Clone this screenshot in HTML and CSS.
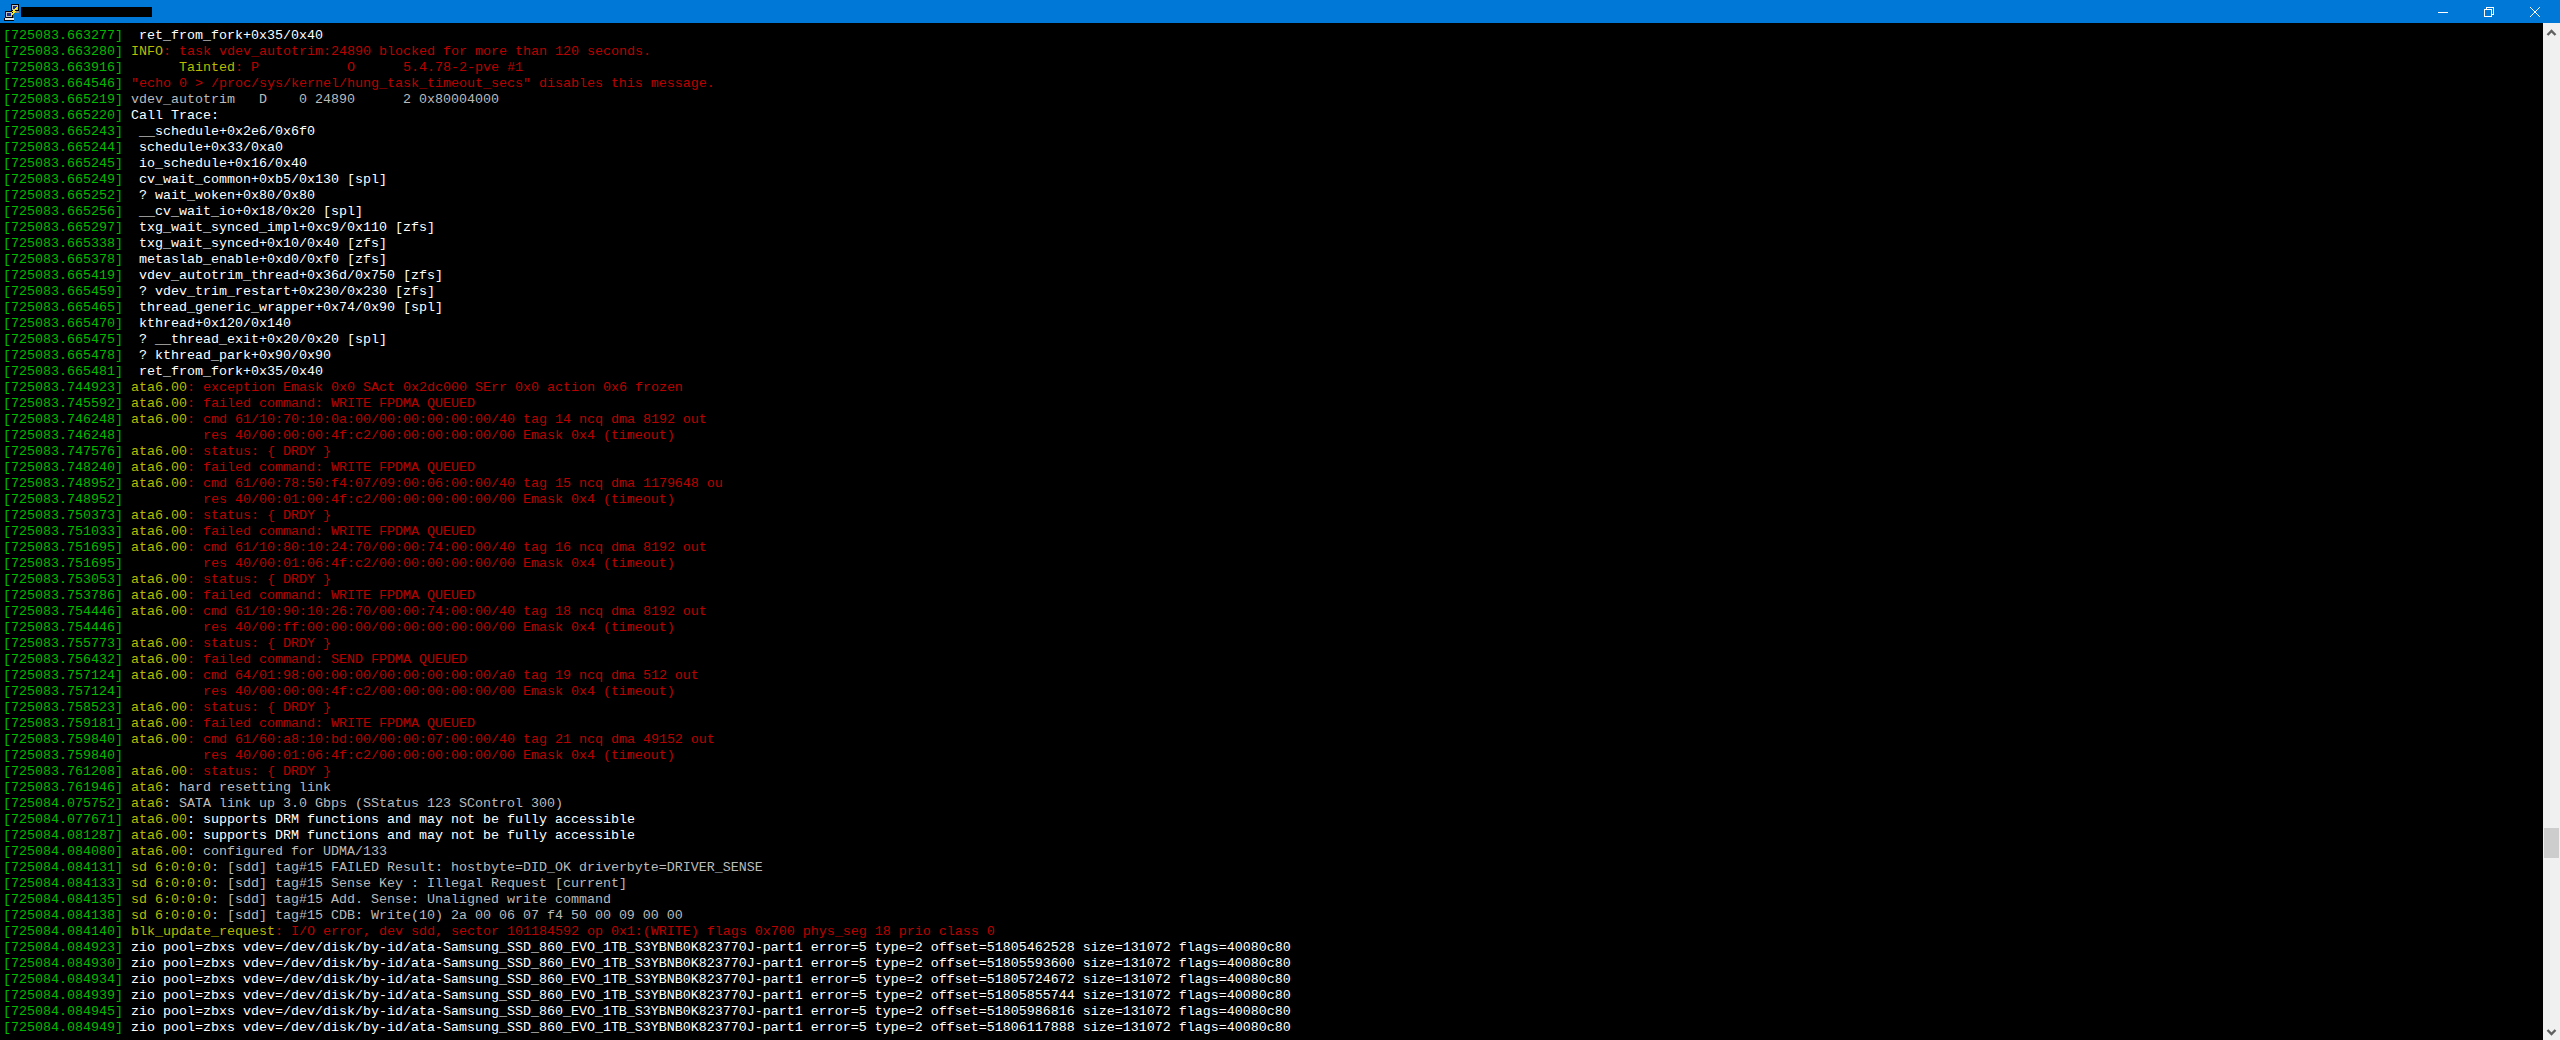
FILE: index.html
```html
<!DOCTYPE html>
<html lang="en">
<head>
<meta charset="utf-8">
<title>PuTTY</title>
<link rel="stylesheet" href="styles.css">
</head>
<body>
<div class="window">
<header class="titlebar">
<svg class="appicon" width="18" height="18" viewBox="0 0 18 18" shape-rendering="crispEdges">
<path fill="#c0c0c0" d="M9 1h8v7H9z"/><path fill="#000" d="M9 1h8v1H9zM9 1h1v7H9zM16 1h1v7h-1zM9 7h8v1H9z"/><path fill="#1a2f8f" d="M11 3h4v3h-4z"/><path fill="#8a8a8a" d="M8 8h9v2H8z"/>
<path fill="#c0c0c0" d="M3 8h8v7H3z"/><path fill="#000" d="M3 8h8v1H3zM3 8h1v7H3zM10 8h1v7h-1zM3 14h8v1H3z"/><path fill="#1a2f8f" d="M5 10h4v3H5z"/><path fill="#e8e8e8" d="M2 15h10v2H2z"/><path fill="#000" d="M2 17h10v1H2zM2 15h1v2H2z"/>
<path fill="#ffe81a" d="M14 4h2v1h-1v1h-1v1h-1v1h1v1h-1v1h-1v1h-1v1H9v-1h1v-1h1V9h-1V8h1V7h1V6h1V5h1z"/>
</svg>
<div class="redacted"></div>
<div class="caption">
<svg class="capicon" width="10" height="10" viewBox="0 0 10 10"><path d="M0 5.5h10" stroke="#fff" fill="none"/></svg>
<svg class="capicon" width="10" height="10" viewBox="0 0 10 10" shape-rendering="crispEdges"><path d="M2.5 2.5V.5h7v7h-2M.5 2.5h7v7h-7z" stroke="#fff" fill="none"/></svg>
<svg class="capicon" width="10" height="10" viewBox="0 0 10 10"><path d="M0 0l10 10M10 0L0 10" stroke="#fff" fill="none"/></svg>
</div>
</header>
<main class="body">
<div class="term">
<div class="l"><span class="g">[725083.663277]</span> <span class="w"> ret_from_fork+0x35/0x40</span></div>
<div class="l"><span class="g">[725083.663280]</span> <span class="y">INFO</span><span class="r">: task vdev_autotrim:24890 blocked for more than 120 seconds.</span></div>
<div class="l"><span class="g">[725083.663916]</span>       <span class="y">Tainted</span><span class="r">: P           O      5.4.78-2-pve #1</span></div>
<div class="l"><span class="g">[725083.664546]</span> <span class="r">"echo 0 &gt; /proc/sys/kernel/hung_task_timeout_secs" disables this message.</span></div>
<div class="l"><span class="g">[725083.665219]</span> <span class="n">vdev_autotrim   D    0 24890      2 0x80004000</span></div>
<div class="l"><span class="g">[725083.665220]</span> <span class="w">Call Trace:</span></div>
<div class="l"><span class="g">[725083.665243]</span> <span class="w"> __schedule+0x2e6/0x6f0</span></div>
<div class="l"><span class="g">[725083.665244]</span> <span class="w"> schedule+0x33/0xa0</span></div>
<div class="l"><span class="g">[725083.665245]</span> <span class="w"> io_schedule+0x16/0x40</span></div>
<div class="l"><span class="g">[725083.665249]</span> <span class="w"> cv_wait_common+0xb5/0x130 [spl]</span></div>
<div class="l"><span class="g">[725083.665252]</span> <span class="w"> ? wait_woken+0x80/0x80</span></div>
<div class="l"><span class="g">[725083.665256]</span> <span class="w"> __cv_wait_io+0x18/0x20 [spl]</span></div>
<div class="l"><span class="g">[725083.665297]</span> <span class="w"> txg_wait_synced_impl+0xc9/0x110 [zfs]</span></div>
<div class="l"><span class="g">[725083.665338]</span> <span class="w"> txg_wait_synced+0x10/0x40 [zfs]</span></div>
<div class="l"><span class="g">[725083.665378]</span> <span class="w"> metaslab_enable+0xd0/0xf0 [zfs]</span></div>
<div class="l"><span class="g">[725083.665419]</span> <span class="w"> vdev_autotrim_thread+0x36d/0x750 [zfs]</span></div>
<div class="l"><span class="g">[725083.665459]</span> <span class="w"> ? vdev_trim_restart+0x230/0x230 [zfs]</span></div>
<div class="l"><span class="g">[725083.665465]</span> <span class="w"> thread_generic_wrapper+0x74/0x90 [spl]</span></div>
<div class="l"><span class="g">[725083.665470]</span> <span class="w"> kthread+0x120/0x140</span></div>
<div class="l"><span class="g">[725083.665475]</span> <span class="w"> ? __thread_exit+0x20/0x20 [spl]</span></div>
<div class="l"><span class="g">[725083.665478]</span> <span class="w"> ? kthread_park+0x90/0x90</span></div>
<div class="l"><span class="g">[725083.665481]</span> <span class="w"> ret_from_fork+0x35/0x40</span></div>
<div class="l"><span class="g">[725083.744923]</span> <span class="y">ata6.00</span><span class="r">: exception Emask 0x0 SAct 0x2dc000 SErr 0x0 action 0x6 frozen</span></div>
<div class="l"><span class="g">[725083.745592]</span> <span class="y">ata6.00</span><span class="r">: failed command: WRITE FPDMA QUEUED</span></div>
<div class="l"><span class="g">[725083.746248]</span> <span class="y">ata6.00</span><span class="r">: cmd 61/10:70:10:0a:00/00:00:00:00:00/40 tag 14 ncq dma 8192 out</span></div>
<div class="l"><span class="g">[725083.746248]</span> <span class="r">         res 40/00:00:00:4f:c2/00:00:00:00:00/00 Emask 0x4 (timeout)</span></div>
<div class="l"><span class="g">[725083.747576]</span> <span class="y">ata6.00</span><span class="r">: status: { DRDY }</span></div>
<div class="l"><span class="g">[725083.748240]</span> <span class="y">ata6.00</span><span class="r">: failed command: WRITE FPDMA QUEUED</span></div>
<div class="l"><span class="g">[725083.748952]</span> <span class="y">ata6.00</span><span class="r">: cmd 61/00:78:50:f4:07/09:00:06:00:00/40 tag 15 ncq dma 1179648 ou</span></div>
<div class="l"><span class="g">[725083.748952]</span> <span class="r">         res 40/00:01:00:4f:c2/00:00:00:00:00/00 Emask 0x4 (timeout)</span></div>
<div class="l"><span class="g">[725083.750373]</span> <span class="y">ata6.00</span><span class="r">: status: { DRDY }</span></div>
<div class="l"><span class="g">[725083.751033]</span> <span class="y">ata6.00</span><span class="r">: failed command: WRITE FPDMA QUEUED</span></div>
<div class="l"><span class="g">[725083.751695]</span> <span class="y">ata6.00</span><span class="r">: cmd 61/10:80:10:24:70/00:00:74:00:00/40 tag 16 ncq dma 8192 out</span></div>
<div class="l"><span class="g">[725083.751695]</span> <span class="r">         res 40/00:01:06:4f:c2/00:00:00:00:00/00 Emask 0x4 (timeout)</span></div>
<div class="l"><span class="g">[725083.753053]</span> <span class="y">ata6.00</span><span class="r">: status: { DRDY }</span></div>
<div class="l"><span class="g">[725083.753786]</span> <span class="y">ata6.00</span><span class="r">: failed command: WRITE FPDMA QUEUED</span></div>
<div class="l"><span class="g">[725083.754446]</span> <span class="y">ata6.00</span><span class="r">: cmd 61/10:90:10:26:70/00:00:74:00:00/40 tag 18 ncq dma 8192 out</span></div>
<div class="l"><span class="g">[725083.754446]</span> <span class="r">         res 40/00:ff:00:00:00/00:00:00:00:00/00 Emask 0x4 (timeout)</span></div>
<div class="l"><span class="g">[725083.755773]</span> <span class="y">ata6.00</span><span class="r">: status: { DRDY }</span></div>
<div class="l"><span class="g">[725083.756432]</span> <span class="y">ata6.00</span><span class="r">: failed command: SEND FPDMA QUEUED</span></div>
<div class="l"><span class="g">[725083.757124]</span> <span class="y">ata6.00</span><span class="r">: cmd 64/01:98:00:00:00/00:00:00:00:00/a0 tag 19 ncq dma 512 out</span></div>
<div class="l"><span class="g">[725083.757124]</span> <span class="r">         res 40/00:00:00:4f:c2/00:00:00:00:00/00 Emask 0x4 (timeout)</span></div>
<div class="l"><span class="g">[725083.758523]</span> <span class="y">ata6.00</span><span class="r">: status: { DRDY }</span></div>
<div class="l"><span class="g">[725083.759181]</span> <span class="y">ata6.00</span><span class="r">: failed command: WRITE FPDMA QUEUED</span></div>
<div class="l"><span class="g">[725083.759840]</span> <span class="y">ata6.00</span><span class="r">: cmd 61/60:a8:10:bd:00/00:00:07:00:00/40 tag 21 ncq dma 49152 out</span></div>
<div class="l"><span class="g">[725083.759840]</span> <span class="r">         res 40/00:01:06:4f:c2/00:00:00:00:00/00 Emask 0x4 (timeout)</span></div>
<div class="l"><span class="g">[725083.761208]</span> <span class="y">ata6.00</span><span class="r">: status: { DRDY }</span></div>
<div class="l"><span class="g">[725083.761946]</span> <span class="y">ata6</span><span class="n">: hard resetting link</span></div>
<div class="l"><span class="g">[725084.075752]</span> <span class="y">ata6</span><span class="n">: SATA link up 3.0 Gbps (SStatus 123 SControl 300)</span></div>
<div class="l"><span class="g">[725084.077671]</span> <span class="y">ata6.00</span><span class="w">: supports DRM functions and may not be fully accessible</span></div>
<div class="l"><span class="g">[725084.081287]</span> <span class="y">ata6.00</span><span class="w">: supports DRM functions and may not be fully accessible</span></div>
<div class="l"><span class="g">[725084.084080]</span> <span class="y">ata6.00</span><span class="n">: configured for UDMA/133</span></div>
<div class="l"><span class="g">[725084.084131]</span> <span class="y">sd 6:0:0:0</span><span class="n">: [sdd] tag#15 FAILED Result: hostbyte=DID_OK driverbyte=DRIVER_SENSE</span></div>
<div class="l"><span class="g">[725084.084133]</span> <span class="y">sd 6:0:0:0</span><span class="n">: [sdd] tag#15 Sense Key : Illegal Request [current]</span></div>
<div class="l"><span class="g">[725084.084135]</span> <span class="y">sd 6:0:0:0</span><span class="n">: [sdd] tag#15 Add. Sense: Unaligned write command</span></div>
<div class="l"><span class="g">[725084.084138]</span> <span class="y">sd 6:0:0:0</span><span class="n">: [sdd] tag#15 CDB: Write(10) 2a 00 06 07 f4 50 00 09 00 00</span></div>
<div class="l"><span class="g">[725084.084140]</span> <span class="y">blk_update_request</span><span class="r">: I/O error, dev sdd, sector 101184592 op 0x1:(WRITE) flags 0x700 phys_seg 18 prio class 0</span></div>
<div class="l"><span class="g">[725084.084923]</span> <span class="w">zio pool=zbxs vdev=/dev/disk/by-id/ata-Samsung_SSD_860_EVO_1TB_S3YBNB0K823770J-part1 error=5 type=2 offset=51805462528 size=131072 flags=40080c80</span></div>
<div class="l"><span class="g">[725084.084930]</span> <span class="w">zio pool=zbxs vdev=/dev/disk/by-id/ata-Samsung_SSD_860_EVO_1TB_S3YBNB0K823770J-part1 error=5 type=2 offset=51805593600 size=131072 flags=40080c80</span></div>
<div class="l"><span class="g">[725084.084934]</span> <span class="w">zio pool=zbxs vdev=/dev/disk/by-id/ata-Samsung_SSD_860_EVO_1TB_S3YBNB0K823770J-part1 error=5 type=2 offset=51805724672 size=131072 flags=40080c80</span></div>
<div class="l"><span class="g">[725084.084939]</span> <span class="w">zio pool=zbxs vdev=/dev/disk/by-id/ata-Samsung_SSD_860_EVO_1TB_S3YBNB0K823770J-part1 error=5 type=2 offset=51805855744 size=131072 flags=40080c80</span></div>
<div class="l"><span class="g">[725084.084945]</span> <span class="w">zio pool=zbxs vdev=/dev/disk/by-id/ata-Samsung_SSD_860_EVO_1TB_S3YBNB0K823770J-part1 error=5 type=2 offset=51805986816 size=131072 flags=40080c80</span></div>
<div class="l"><span class="g">[725084.084949]</span> <span class="w">zio pool=zbxs vdev=/dev/disk/by-id/ata-Samsung_SSD_860_EVO_1TB_S3YBNB0K823770J-part1 error=5 type=2 offset=51806117888 size=131072 flags=40080c80</span></div>
</div>
<aside class="scrollbar">
<svg class="arrow" width="17" height="17" viewBox="0 0 17 17"><path d="M4.5 12L8.500 8l4 4" stroke="#606060" stroke-width="2.400" fill="none"/></svg>
<div class="track"><div class="thumb"></div></div>
<svg class="arrow" width="17" height="17" viewBox="0 0 17 17"><path d="M4.5 7l4 4 4-4" stroke="#606060" stroke-width="2.400" fill="none"/></svg>
</aside>
</main>
</div>
</body>
</html>
```
FILE: styles.css
```css
* { box-sizing: border-box; }
html, body { margin: 0; height: 100%; background: #000; overflow: hidden; }
.window { display: flex; flex-direction: column; width: 2560px; height: 1040px; }
.titlebar { display: flex; align-items: center; height: 23px; flex: none; background: #0078d7; padding-left: 2px; }
.appicon { flex: none; }
.redacted { width: 131px; height: 10px; background: #000; margin-left: 1px; }
.caption { margin-left: auto; display: flex; align-items: center; gap: 36px; padding-right: 20px; }
.capicon { display: block; }
.body { flex: 1; display: flex; min-height: 0; }
.term { flex: 1; min-width: 0; padding: 5px 0 0 3px; background: #000; font: 13.333px/16px "Liberation Mono", "Courier New", monospace; overflow: hidden; }
.l { height: 16px; white-space: pre; color: #bbb; }
.g { color: #0b0; }
.y { color: #bb0; }
.r { color: #b00; }
.n { color: #bbb; }
.w { color: #fff; }
.scrollbar { flex: none; width: 17px; background: #f0f0f0; display: flex; flex-direction: column; }
.arrow { display: block; flex: none; }
.track { flex: 1; position: relative; }
.thumb { position: absolute; left: 1px; right: 1px; top: 788px; height: 30px; background: #cdcdcd; }
```
